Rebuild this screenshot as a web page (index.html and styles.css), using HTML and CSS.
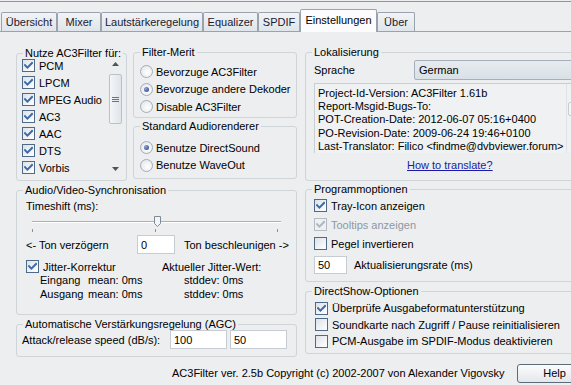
FILE: index.html
```html
<!DOCTYPE html>
<html lang="de">
<head>
<meta charset="utf-8">
<title>AC3Filter Einstellungen</title>
<link rel="stylesheet" href="styles.css">
</head>
<body>
<div class="window">
  <div class="tabs">
    <div class="tab t1">Übersicht</div>
    <div class="tab t2">Mixer</div>
    <div class="tab t3">Lautstärkeregelung</div>
    <div class="tab t4">Equalizer</div>
    <div class="tab t5">SPDIF</div>
    <div class="tab t6 active">Einstellungen</div>
    <div class="tab t7">Über</div>
  </div>
  <div class="panel">
    <div class="cols">
      <div class="leftcol">
        <div class="row1">
          <fieldset class="grp g-nutze">
            <legend>Nutze AC3Filter für:</legend>
            <div class="listbox">
              <div class="items">
                <div class="chk"><span class="box on"><svg viewBox="0 0 9 9" width="9" height="9"><path d="M1 4.2 L3.4 6.6 L8 2" /></svg></span>PCM</div>
                <div class="chk"><span class="box on"><svg viewBox="0 0 9 9" width="9" height="9"><path d="M1 4.2 L3.4 6.6 L8 2" /></svg></span>LPCM</div>
                <div class="chk"><span class="box on"><svg viewBox="0 0 9 9" width="9" height="9"><path d="M1 4.2 L3.4 6.6 L8 2" /></svg></span>MPEG Audio</div>
                <div class="chk"><span class="box on"><svg viewBox="0 0 9 9" width="9" height="9"><path d="M1 4.2 L3.4 6.6 L8 2" /></svg></span>AC3</div>
                <div class="chk"><span class="box on"><svg viewBox="0 0 9 9" width="9" height="9"><path d="M1 4.2 L3.4 6.6 L8 2" /></svg></span>AAC</div>
                <div class="chk"><span class="box on"><svg viewBox="0 0 9 9" width="9" height="9"><path d="M1 4.2 L3.4 6.6 L8 2" /></svg></span>DTS</div>
                <div class="chk"><span class="box on"><svg viewBox="0 0 9 9" width="9" height="9"><path d="M1 4.2 L3.4 6.6 L8 2" /></svg></span>Vorbis</div>
              </div>
              <div class="vscroll">
                <div class="sbtn"><svg viewBox="0 0 7 4" width="7" height="4"><path d="M0 4 L3.5 0 L7 4Z"/></svg></div>
                <div class="strack">
                  <div class="sthumb"><svg viewBox="0 0 7 7" width="7" height="7"><path d="M0 1.5H7M0 3.5H7M0 5.5H7"/></svg></div>
                </div>
                <div class="sbtn"><svg viewBox="0 0 7 4" width="7" height="4"><path d="M0 0 L3.5 4 L7 0Z"/></svg></div>
              </div>
            </div>
          </fieldset>
          <div class="col2">
            <fieldset class="grp g-merit">
              <legend>Filter-Merit</legend>
              <div class="radios">
                <div class="rad"><span class="circ"></span>Bevorzuge AC3Filter</div>
                <div class="rad"><span class="circ sel"></span>Bevorzuge andere Dekoder</div>
                <div class="rad"><span class="circ"></span>Disable AC3Filter</div>
              </div>
            </fieldset>
            <fieldset class="grp g-render">
              <legend>Standard Audiorenderer</legend>
              <div class="radios r2">
                <div class="rad"><span class="circ sel"></span>Benutze DirectSound</div>
                <div class="rad"><span class="circ"></span>Benutze WaveOut</div>
              </div>
            </fieldset>
          </div>
        </div>
        <fieldset class="grp g-sync">
          <legend>Audio/Video-Synchronisation</legend>
          <div class="sync">
            <div class="lbl">Timeshift (ms):</div>
            <div class="slider">
              <div class="track"></div>
              <div class="thumb"><svg viewBox="0 0 7 11" width="7" height="11"><path d="M0.5 0.5H6.5V7.5L3.5 10.5L0.5 7.5Z"/></svg></div>
              <div class="ticks"><span></span><span></span><span></span></div>
            </div>
            <div class="tsrow">
              <span class="tlabel tl1">&lt;- Ton verzögern</span>
              <span class="edit e-ts">0</span>
              <span class="tlabel">Ton beschleunigen -&gt;</span>
            </div>
            <div class="jrow">
              <div class="chk jchk"><span class="box on"><svg viewBox="0 0 9 9" width="9" height="9"><path d="M1 4.2 L3.4 6.6 L8 2" /></svg></span>Jitter-Korrektur</div>
              <div class="jval">Aktueller Jitter-Wert:</div>
            </div>
            <div class="jgrid">
              <span>Eingang</span><span>mean: 0ms</span><span>stddev: 0ms</span>
              <span>Ausgang</span><span>mean: 0ms</span><span>stddev: 0ms</span>
            </div>
          </div>
        </fieldset>
        <fieldset class="grp g-agc">
          <legend>Automatische Verstärkungsregelung (AGC)</legend>
          <div class="agc">
            <span class="alabel">Attack/release speed (dB/s):</span>
            <span class="edit e-agc">100</span>
            <span class="edit e-agc">50</span>
          </div>
        </fieldset>
      </div>
      <div class="rightcol">
        <fieldset class="grp g-lok">
          <legend>Lokalisierung</legend>
          <div class="langrow">
            <span class="slabel">Sprache</span>
            <span class="combo">German</span>
          </div>
          <div class="infobox">
            <div class="infotext">
              <div>Project-Id-Version: AC3Filter 1.61b</div>
              <div>Report-Msgid-Bugs-To:</div>
              <div>POT-Creation-Date: 2012-06-07 05:16+0400</div>
              <div>PO-Revision-Date: 2009-06-24 19:46+0100</div>
              <div>Last-Translator: Filico &lt;findme@dvbviewer.forum&gt;</div>
            </div>
            <div class="infoscroll"><div class="isbtn"></div></div>
          </div>
          <div class="linkrow"><a class="link" href="#">How to translate?</a></div>
        </fieldset>
        <fieldset class="grp g-prog">
          <legend>Programmoptionen</legend>
          <div class="plist">
            <div class="chk"><span class="box on"><svg viewBox="0 0 9 9" width="9" height="9"><path d="M1 4.2 L3.4 6.6 L8 2" /></svg></span>Tray-Icon anzeigen</div>
            <div class="chk dis"><span class="box on"><svg viewBox="0 0 9 9" width="9" height="9"><path d="M1 4.2 L3.4 6.6 L8 2" /></svg></span>Tooltips anzeigen</div>
            <div class="chk"><span class="box"></span>Pegel invertieren</div>
            <div class="raterow"><span class="edit e-rate">50</span><span>Aktualisierungsrate (ms)</span></div>
          </div>
        </fieldset>
        <fieldset class="grp g-ds">
          <legend>DirectShow-Optionen</legend>
          <div class="dlist">
            <div class="chk"><span class="box on"><svg viewBox="0 0 9 9" width="9" height="9"><path d="M1 4.2 L3.4 6.6 L8 2" /></svg></span>Überprüfe Ausgabeformatunterstützung</div>
            <div class="chk"><span class="box"></span>Soundkarte nach Zugriff / Pause reinitialisieren</div>
            <div class="chk"><span class="box"></span>PCM-Ausgabe im SPDIF-Modus deaktivieren</div>
          </div>
        </fieldset>
      </div>
    </div>
    <div class="footer">
      <span class="copy">AC3Filter ver. 2.5b Copyright (c) 2002-2007 von Alexander Vigovsky</span>
      <span class="btn">Help</span>
    </div>
  </div>
</div>
</body>
</html>
```

FILE: styles.css
```css
* { box-sizing: border-box; }
html, body { margin: 0; padding: 0; }
body {
  width: 571px;
  height: 385px;
  overflow: hidden;
  background: #eceef0;
  font-family: "Liberation Sans", Arial, sans-serif;
  font-size: 11px;
  color: #000;
}
.window {
  width: 600px;
  margin-top: 1px;
  border-top: 1px solid #8e969d;
}
.tabs {
  display: flex;
  align-items: flex-end;
  height: 29px;
  padding-left: 1px;
  position: relative;
  z-index: 2;
}
.tab {
  flex: none;
  height: 19px;
  border: 1px solid #9aa3ab;
  border-bottom: none;
  border-radius: 2px 2px 0 0;
  background: linear-gradient(#f2f4f6, #dfe5ea);
  text-align: center;
  line-height: 18px;
  color: #1a2030;
}
.tab.active {
  height: 23px;
  margin-bottom: -1px;
  background: #fcfcfe;
  border-color: #9aa3ab;
  line-height: 21px;
  color: #000;
}
.t1 { width: 56px; }
.t2 { width: 44px; }
.t3 { width: 102px; }
.t4 { width: 55px; }
.t5 { width: 42px; }
.t6 { width: 77px; }
.t7 { width: 38px; }
.panel {
  border-top: 1px solid #9aa3ab;
  padding: 14px 0 0 16px;
}
.cols {
  display: flex;
  gap: 8px;
}
.leftcol {
  width: 281px;
  flex: none;
  display: flex;
  flex-direction: column;
}
.row1 {
  display: flex;
  gap: 6px;
}
.col2 {
  width: 164px;
  display: flex;
  flex-direction: column;
  gap: 2px;
}
.grp {
  margin: 0;
  padding: 0;
  border: 1px solid #cfd4d9;
  border-radius: 3px;
  min-width: 0;
}
.grp legend {
  margin-left: 6px;
  padding: 0 2px;
  line-height: 13px;
}
.g-nutze { width: 111px; height: 134px; margin-top: 1px; }
.g-merit { height: 72px; }
.g-render { height: 59px; }
.g-sync { height: 131px; margin-top: 3px; }
.g-agc { height: 39px; margin-top: 3px; }
.rightcol {
  width: 290px;
  flex: none;
  display: flex;
  flex-direction: column;
}
.g-lok { height: 135px; }
.g-prog { height: 99px; margin-top: 2px; }
.g-ds { height: 69px; margin-top: 3px; }

/* checkbox */
.chk {
  display: flex;
  align-items: center;
  height: 17px;
  white-space: nowrap;
}
.box {
  width: 13px;
  height: 13px;
  flex: none;
  border: 1px solid #4f6a86;
  background: linear-gradient(135deg, #dde2e8, #ffffff);
  margin-right: 4px;
  display: flex;
  align-items: center;
  justify-content: center;
}
.box svg path {
  fill: none;
  stroke: #3d6aa8;
  stroke-width: 2;
  stroke-linecap: square;
}
.chk.dis { color: #8c98a4; }
.chk.dis .box { border-color: #b3bcc5; background: #eef0f2; }
.chk.dis .box svg path { stroke: #b0b6bc; }

/* list */
.listbox {
  display: flex;
  margin: -3px 0 0 4px;
  height: 119px;
}
.items {
  width: 88px;
  padding-left: 1px;
}
.vscroll {
  width: 13px;
  display: flex;
  flex-direction: column;
  height: 119px;
}
.sbtn {
  height: 14px;
  display: flex;
  align-items: center;
  justify-content: center;
}
.sbtn svg path { fill: #4a5560; }
.strack { flex: 1; }
.sthumb {
  margin-top: 3px;
  height: 50px;
  border: 1px solid #b9c2cb;
  border-radius: 2px;
  background: linear-gradient(90deg, #f4f6f8, #dfe4e9);
  display: flex;
  align-items: center;
  justify-content: center;
}
.sthumb svg path { stroke: #6b7580; stroke-width: 1; fill: none; }

/* radios */
.radios { padding: 4px 0 0 6px; }
.radios.r2 { padding-top: 6px; }
.rad {
  display: flex;
  align-items: center;
  height: 17.5px;
  white-space: nowrap;
}
.circ {
  width: 13px;
  height: 13px;
  flex: none;
  border-radius: 50%;
  border: 1px solid #a3adb7;
  background: radial-gradient(circle at 60% 60%, #ffffff, #dde2e7);
  margin-right: 3px;
  display: flex;
  align-items: center;
  justify-content: center;
}
.circ.sel::after {
  content: "";
  width: 5px;
  height: 5px;
  border-radius: 50%;
  background: radial-gradient(circle at 35% 35%, #8fa6d8, #24377a);
}

/* sync */
.sync { padding: 3px 0 0 9px; }
.lbl { height: 13px; line-height: 13px; }
.slider {
  position: relative;
  height: 23px;
  margin-left: 6px;
  width: 249px;
}
.track {
  position: absolute;
  left: 0;
  right: 0;
  top: 8px;
  height: 2px;
  border-top: 1px solid #a8b0b8;
  border-bottom: 1px solid #ffffff;
}
.thumb {
  position: absolute;
  left: 122px;
  top: 3px;
  width: 7px;
  height: 11px;
}
.thumb svg path { fill: #f2f4f6; stroke: #7e8a96; stroke-width: 1; }
.ticks {
  position: absolute;
  left: 0;
  right: 3px;
  top: 16px;
  display: flex;
  justify-content: space-between;
}
.ticks span { width: 1px; height: 3px; background: #8a939c; }
.tsrow {
  display: flex;
  align-items: center;
  height: 19px;
  margin-top: -1px;
}
.tsrow .tlabel { white-space: nowrap; }
.tl1 { width: 111px; flex: none; }
.edit {
  display: inline-flex;
  align-items: center;
  background: #fff;
  border: 1px solid #c6ccd2;
  height: 19px;
  padding-left: 3px;
  flex: none;
}
.e-ts { width: 38px; margin: 0 9px 0 0; }
.jrow {
  display: flex;
  align-items: center;
  height: 17px;
  margin-top: 4px;
}
.jchk { width: 136px; }
.jgrid {
  display: grid;
  grid-template-columns: 48px 96px auto;
  padding-left: 14px;
  line-height: 13.5px;
  margin-top: -1px;
}

/* agc */
.agc {
  display: flex;
  align-items: center;
  margin-top: -1px;
  padding: 0 0 0 5px;
  white-space: nowrap;
}
.alabel { width: 148px; flex: none; }
.e-agc { width: 57px; margin-right: 3px; }

/* lokalisierung */
.langrow {
  display: flex;
  align-items: center;
  height: 20px;
  margin-top: 1px;
  padding-left: 8px;
}
.slabel { width: 100px; flex: none; }
.combo {
  flex: 1;
  height: 20px;
  border: 1px solid #a5b0ba;
  border-radius: 2px;
  background: linear-gradient(#e6ebef, #d9e1e7);
  padding-left: 4px;
  display: flex;
  align-items: center;
}
.infobox {
  display: flex;
  margin: 3px 0 0 8px;
  height: 70px;
  border-top: 1px solid #c9ced3;
  border-left: 1px solid #c9ced3;
  background: #eff1f3;
}
.infotext {
  width: 251px;
  flex: none;
  padding: 3px 0 0 3px;
  line-height: 13.2px;
  white-space: nowrap;
  overflow: hidden;
}
.infoscroll {
  flex: 1;
  border-left: 1px solid #dfe3e7;
  padding-top: 18px;
}
.isbtn { width: 14px; height: 14px; border: 1px solid #c5ccd3; border-radius: 2px; background: #f4f6f8; margin-left: 1px; }
.linkrow { padding: 6px 0 0 101px; }
.link { color: #1b1ba8; text-decoration: underline; }

/* programmoptionen */
.plist { padding: 0 0 0 8px; }
.plist .chk { height: 19px; }
.raterow {
  display: flex;
  align-items: center;
  margin-top: 3px;
  gap: 7px;
}
.e-rate { width: 33px; height: 18px; }
.dlist { padding: 2px 0 0 9px; }
.dlist .chk { height: 16.5px; }

/* footer */
.footer {
  display: flex;
  align-items: center;
  padding-left: 156px;
  margin-top: 6px;
  height: 20px;
  gap: 7px;
}
.copy { width: 338px; flex: none; white-space: nowrap; }
.btn {
  flex: none;
  width: 75px;
  height: 19px;
  border: 1px solid #5d6b78;
  border-radius: 3px;
  background: linear-gradient(#fcfcfd, #e3e7eb);
  text-align: center;
  line-height: 17px;
}
```
